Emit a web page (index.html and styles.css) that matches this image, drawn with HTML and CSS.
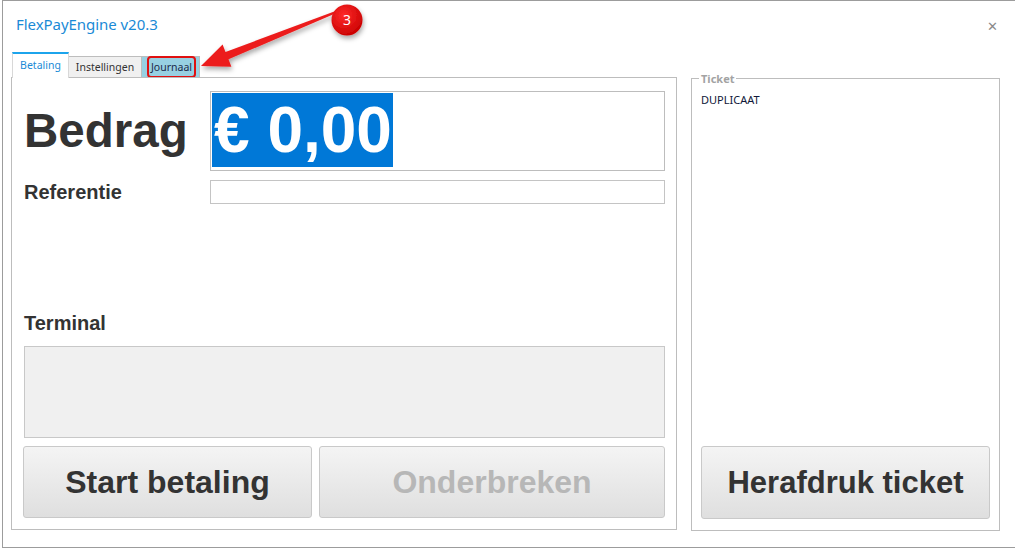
FILE: index.html
```html
<!DOCTYPE html>
<html lang="nl">
<head>
<meta charset="utf-8">
<title>FlexPayEngine v20.3</title>
<link rel="stylesheet" href="styles.css">
</head>
<body>
<div class="window">
  <header class="titlebar">
    <span class="title">FlexPayEngine v20.3</span>
    <span class="close">&#x2715;</span>
  </header>

  <div class="content">
    <section class="left">
      <nav class="tabs">
        <span class="tab active">Betaling</span>
        <span class="tab settings">Instellingen</span>
        <span class="tab hover"><span class="tab-label">Journaal</span></span>
      </nav>
      <div class="panel">
        <div class="row amount-row">
          <span class="label big">Bedrag</span>
          <div class="amount-box"><span class="amount">€ 0,00</span></div>
        </div>
        <div class="row ref-row">
          <span class="label">Referentie</span>
          <div class="ref-input"></div>
        </div>
        <div class="spacer"></div>
        <span class="label terminal-label">Terminal</span>
        <div class="terminal-box"></div>
        <div class="buttons">
          <button class="btn start">Start betaling</button>
          <button class="btn stop" disabled>Onderbreken</button>
        </div>
      </div>
    </section>

    <fieldset class="ticket">
      <legend>Ticket</legend>
      <div class="ticket-text">DUPLICAAT</div>
      <div class="spacer"></div>
      <button class="btn reprint">Herafdruk ticket</button>
    </fieldset>
  </div>

  <!-- callout: step 3 points at the Journaal tab -->
  <svg class="callout" width="400" height="90" viewBox="0 0 400 90">
    <defs>
      <filter id="shade" x="-20%" y="-20%" width="140%" height="160%">
        <feDropShadow dx="1" dy="3" stdDeviation="2.5" flood-color="#000" flood-opacity="0.35"/>
      </filter>
      <radialGradient id="badge" cx="40%" cy="35%" r="70%">
        <stop offset="0" stop-color="#ff2a2a"/>
        <stop offset="1" stop-color="#c80000"/>
      </radialGradient>
    </defs>
    <polygon filter="url(#shade)" fill="#ec1c1c"
      points="334.6,11.1 224.5,51.9 221.6,44.4 200,66 230.4,66.8 227.5,59.3 335.4,12.9"/>
    <circle filter="url(#shade)" cx="346" cy="20" r="15.5" fill="url(#badge)"/>
    <text x="346" y="25" text-anchor="middle" class="badge-num">3</text>
  </svg>
</div>
</body>
</html>
```

FILE: styles.css
```css
html, body {
  margin: 0;
  padding: 0;
  background: #fff;
  overflow: hidden;
}

body {
  width: 1015px;
  height: 549px;
  font-family: "Noto Sans", "Open Sans", sans-serif;
}

.window {
  position: relative;
  margin-left: 2px;
  height: 546px;
  border: 1px solid #9c9c9c;
  border-right: none;
  background: #fff;
  display: flex;
  flex-direction: column;
}

/* title bar */
.titlebar {
  height: 51px;
  display: flex;
  align-items: flex-start;
  justify-content: space-between;
  padding: 0 17px 0 13px;
  box-sizing: border-box;
}

.title {
  margin-top: 13px;
  font-size: 15px;
  color: #1a8ad6;
  letter-spacing: -0.05px;
}

.close {
  margin-top: 16px;
  font-size: 13px;
  color: #8a8a8a;
}

/* main area */
.content {
  display: flex;
  padding: 0 13px 0 8px;
  gap: 14px;
  height: 478px;
}

.left {
  width: 666px;
  display: flex;
  flex-direction: column;
}

/* tabs */
.tabs {
  display: flex;
  align-items: flex-end;
  height: 25px;
  padding-left: 1px;
}

.tab {
  font-size: 10.5px;
  color: #333;
  height: 21px;
  line-height: 20px;
  box-sizing: border-box;
  text-align: center;
  background: #f0f0f0;
  border: 1px solid #bdbdbd;
  border-bottom: none;
  border-left: none;
  white-space: nowrap;
}

.tab.active {
  width: 57px;
  line-height: 22px;
  background: #fff;
  color: #1a8ad6;
  border: none;
  border-top: 2px solid #1ca4ec;
  border-left: 1px solid #d8d8d8;
  border-right: 1px solid #d8d8d8;
  margin-bottom: -1px;
  position: relative;
  z-index: 1;
  height: 26px;
}

.tab.settings {
  width: 73px;
}

.tab.hover {
  width: 58px;
  background: #97d0e2;
  color: #1b2a4a;
  padding: 0 4px 0 5px;
  text-align: left;
}

.tab-label {
  display: inline-block;
  box-sizing: border-box;
  width: 49px;
  height: 22px;
  line-height: 18px;
  text-align: center;
  margin-top: -2px;
  border: 2px solid #e01010;
  border-radius: 4px;
}

/* panel */
.panel {
  flex: 1;
  border: 1px solid #bdbdbd;
  padding: 13px 11px 11px 12px;
  display: flex;
  flex-direction: column;
}

.row {
  display: flex;
}

.label {
  width: 186px;
  flex: none;
  font-family: "Liberation Sans", Arial, sans-serif;
  font-weight: bold;
  font-size: 20px;
  line-height: 24px;
  color: #333;
}

.label.big {
  font-size: 47.5px;
  line-height: 54px;
}

.amount-row {
  align-items: center;
  height: 80px;
}

.amount-box {
  flex: 1;
  height: 80px;
  box-sizing: border-box;
  border: 1px solid #bdbdbd;
  padding: 1px;
}

.amount {
  display: inline-block;
  background: #0078d7;
  color: #fff;
  font-family: "Liberation Sans", Arial, sans-serif;
  font-weight: bold;
  font-size: 64px;
  line-height: 74px;
  padding: 0 1px 0 2px;
}

.ref-row {
  margin-top: 9px;
}

.ref-input {
  flex: 1;
  height: 24px;
  box-sizing: border-box;
  border: 1px solid #c4c4c4;
}

.spacer {
  flex: 1;
}

.terminal-label {
  margin-bottom: 11px;
}

.terminal-box {
  height: 92px;
  box-sizing: border-box;
  background: #f0f0f0;
  border: 1px solid #c8c8c8;
}

.buttons {
  display: flex;
  gap: 7px;
  margin-top: 8px;
  margin-left: -1px;
}

.btn {
  height: 72px;
  box-sizing: border-box;
  border: 1px solid #c9c9c9;
  border-radius: 3px;
  background: linear-gradient(#f4f4f4, #dfdfdf);
  font-family: "Liberation Sans", Arial, sans-serif;
  font-weight: bold;
  font-size: 32px;
  color: #333;
  padding: 0;
}

.btn.start {
  width: 289px;
}

.btn.stop {
  flex: 1;
  color: #b7b7b7;
}

/* ticket group */
.ticket {
  width: 309px;
  box-sizing: border-box;
  margin: 20px 0 0 0;
  border: 1px solid #bdbdbd;
  padding: 8px 9px 11px 7px;
  display: flex;
  flex-direction: column;
  height: 459px;
  min-width: 0;
}

.ticket legend {
  padding: 0 2px;
  font-size: 11px;
  font-weight: bold;
  color: #a3a3a3;
  line-height: 13px;
}

.ticket-text {
  font-size: 11px;
  color: #10173a;
  padding-left: 2px;
  line-height: 14px;
}

.btn.reprint {
  margin-left: 2px;
  height: 73px;
  font-size: 31px;
}

/* callout overlay */
.callout {
  position: absolute;
  left: -2px;
  top: -1px;
  pointer-events: none;
  overflow: visible;
}

.badge-num {
  font-family: "Noto Sans", sans-serif;
  font-size: 14px;
  fill: #fff;
}
```
